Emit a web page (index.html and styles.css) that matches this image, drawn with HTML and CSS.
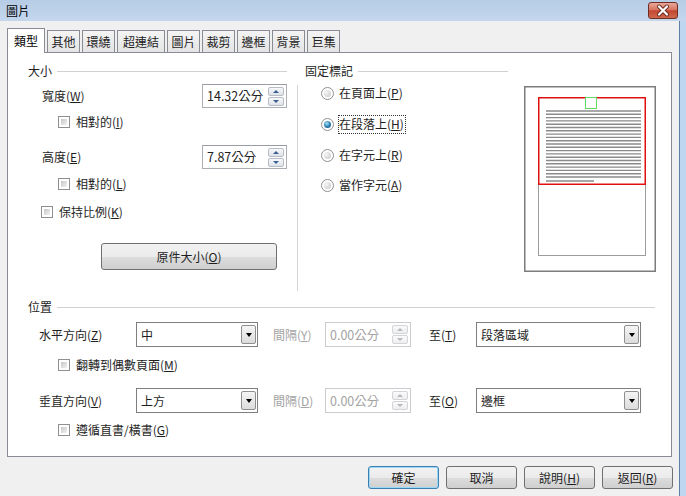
FILE: index.html
```html
<!DOCTYPE html>
<html lang="zh-Hant">
<head>
    <meta charset="UTF-8">
    <title>圖片</title>
    <link rel="stylesheet" href="styles.css">
</head>
<body>
<div class="window">
    <div class="titlebar">
        <span class="title">圖片</span>
        <div class="close-btn">
            <svg width="28" height="15" viewBox="0 0 28 15">
                <path d="M10 3.5 L18 11.5 M18 3.5 L10 11.5" stroke="#6b2b22" stroke-width="4" stroke-linecap="round"/>
                <path d="M10 3.5 L18 11.5 M18 3.5 L10 11.5" stroke="#fff" stroke-width="2.2" stroke-linecap="round"/>
            </svg>
        </div>
    </div>

    <div class="frame">
        <div class="client">
            <div class="tabs">
                <div class="tab active">類型</div>
                <div class="tab">其他</div>
                <div class="tab">環繞</div>
                <div class="tab long">超連結</div>
                <div class="tab">圖片</div>
                <div class="tab">裁剪</div>
                <div class="tab">邊框</div>
                <div class="tab">背景</div>
                <div class="tab">巨集</div>
            </div>

            <div class="panel">
                <div class="top">
                    <!-- 大小 -->
                    <div class="col-size">
                        <div class="group-title"><span>大小</span><i class="rule"></i></div>

                        <div class="field-row first">
                            <span class="label">寬度(<u>W</u>)</span>
                            <div class="spin">
                                <span class="spin-value">14.32公分</span>
                                <span class="spin-btns"><b class="up"></b><b class="down"></b></span>
                            </div>
                        </div>
                        <div class="check-row rel-w"><span class="check"></span><span>相對的(<u>I</u>)</span></div>

                        <div class="field-row second">
                            <span class="label">高度(<u>E</u>)</span>
                            <div class="spin">
                                <span class="spin-value">7.87公分</span>
                                <span class="spin-btns"><b class="up"></b><b class="down"></b></span>
                            </div>
                        </div>
                        <div class="check-row rel-h"><span class="check"></span><span>相對的(<u>L</u>)</span></div>

                        <div class="check-row keep"><span class="check"></span><span>保持比例(<u>K</u>)</span></div>

                        <div class="push-btn original">原件大小(<u>O</u>)</div>
                    </div>

                    <div class="vsep"></div>

                    <!-- 固定標記 -->
                    <div class="col-anchor">
                        <div class="group-title"><span>固定標記</span><i class="rule"></i></div>
                        <div class="radio-row r1"><span class="radio"></span><span>在頁面上(<u>P</u>)</span></div>
                        <div class="radio-row r2"><span class="radio on"></span><span class="focus">在段落上(<u>H</u>)</span></div>
                        <div class="radio-row r3"><span class="radio"></span><span>在字元上(<u>R</u>)</span></div>
                        <div class="radio-row r4"><span class="radio"></span><span>當作字元(<u>A</u>)</span></div>
                    </div>

                    <div class="preview">
                        <svg width="132" height="186" viewBox="0 0 132 186">
                            <rect x="0.75" y="0.75" width="130.5" height="184.5" fill="#fff" stroke="#7c7c7c" stroke-width="1.5"/>
                            <rect x="14.5" y="11.5" width="107" height="158" fill="#fff" stroke="#9c9c9c" stroke-width="1"/>
                            <g stroke="#8a8a8a" stroke-width="1.4">
                                <line x1="22" y1="25" x2="117" y2="25"/>
                                <line x1="22" y1="28.3" x2="117" y2="28.3"/>
                                <line x1="22" y1="31.6" x2="117" y2="31.6"/>
                                <line x1="22" y1="34.9" x2="117" y2="34.9"/>
                                <line x1="22" y1="38.2" x2="117" y2="38.2"/>
                                <line x1="22" y1="41.5" x2="117" y2="41.5"/>
                                <line x1="22" y1="44.8" x2="117" y2="44.8"/>
                                <line x1="22" y1="48.1" x2="117" y2="48.1"/>
                                <line x1="22" y1="51.4" x2="117" y2="51.4"/>
                                <line x1="22" y1="54.7" x2="117" y2="54.7"/>
                                <line x1="22" y1="58" x2="117" y2="58"/>
                                <line x1="22" y1="61.3" x2="117" y2="61.3"/>
                                <line x1="22" y1="64.6" x2="117" y2="64.6"/>
                                <line x1="22" y1="67.9" x2="117" y2="67.9"/>
                                <line x1="22" y1="71.2" x2="117" y2="71.2"/>
                                <line x1="22" y1="74.5" x2="117" y2="74.5"/>
                                <line x1="22" y1="77.8" x2="117" y2="77.8"/>
                                <line x1="22" y1="81.1" x2="117" y2="81.1"/>
                                <line x1="22" y1="84.4" x2="117" y2="84.4"/>
                                <line x1="22" y1="87.7" x2="117" y2="87.7"/>
                                <line x1="22" y1="91" x2="117" y2="91"/>
                                <line x1="22" y1="95" x2="70" y2="95"/>
                            </g>
                            <rect x="14.75" y="11.75" width="106.5" height="86.5" fill="none" stroke="#e01010" stroke-width="1.5"/>
                            <rect x="61.5" y="11.5" width="11" height="11" fill="#fff" stroke="#62d862" stroke-width="1"/>
                        </svg>
                    </div>
                </div>

                <!-- 位置 -->
                <div class="group-title wide"><span>位置</span><i class="rule"></i></div>

                <div class="pos-row first">
                    <span class="pos-label">水平方向(<u>Z</u>)</span>
                    <div class="combo"><span>中</span><span class="drop"></span></div>
                    <span class="gap-label">間隔(<u>Y</u>)</span>
                    <div class="spin disabled">
                        <span class="spin-value">0.00公分</span>
                        <span class="spin-btns"><b class="up"></b><b class="down"></b></span>
                    </div>
                    <span class="to-label">至(<u>T</u>)</span>
                    <div class="combo wide"><span>段落區域</span><span class="drop"></span></div>
                </div>
                <div class="check-row mirror"><span class="check"></span><span>翻轉到偶數頁面(<u>M</u>)</span></div>

                <div class="pos-row second">
                    <span class="pos-label">垂直方向(<u>V</u>)</span>
                    <div class="combo"><span>上方</span><span class="drop"></span></div>
                    <span class="gap-label">間隔(<u>D</u>)</span>
                    <div class="spin disabled">
                        <span class="spin-value">0.00公分</span>
                        <span class="spin-btns"><b class="up"></b><b class="down"></b></span>
                    </div>
                    <span class="to-label">至(<u>O</u>)</span>
                    <div class="combo wide"><span>邊框</span><span class="drop"></span></div>
                </div>
                <div class="check-row follow"><span class="check"></span><span>遵循直書/橫書(<u>G</u>)</span></div>
            </div>

            <div class="actions">
                <div class="push-btn default">確定</div>
                <div class="push-btn">取消</div>
                <div class="push-btn">說明(<u>H</u>)</div>
                <div class="push-btn">返回(<u>R</u>)</div>
            </div>
        </div>
        <div class="frame-right"></div>
    </div>
</div>
</body>
</html>
```

FILE: styles.css
```css
* {
    margin: 0;
    padding: 0;
    box-sizing: border-box;
}

body {
    font-family: "Noto Sans CJK TC", "Noto Sans", sans-serif;
    font-size: 12px;
    line-height: 16px;
    color: #1e1e1e;
    background: #f0f0f0;
    width: 686px;
    height: 496px;
    overflow: hidden;
}

u {
    text-decoration: underline;
    text-underline-offset: 1px;
}

.window {
    width: 686px;
    height: 496px;
    display: flex;
    flex-direction: column;
}

/* title bar */
.titlebar {
    height: 21px;
    display: flex;
    align-items: flex-start;
    padding: 0 8px 0 6px;
    background: linear-gradient(#b6cce6, #c4d7ed);
}

.title {
    line-height: 21px;
    color: #000;
}

.close-btn {
    margin-left: auto;
    margin-top: 2px;
    width: 30px;
    height: 17px;
    border: 1px solid #6e2e26;
    border-radius: 3px;
    background: linear-gradient(#e8a898, #d77562 45%, #c24630 52%, #cf6a4f);
    display: flex;
    align-items: center;
    justify-content: center;
}

.frame {
    flex: 1;
    display: flex;
}

.client {
    width: 679px;
    padding: 7px 6px 0 7px;
    background: #f0f0f0;
}

.frame-right {
    flex: 1;
    border-left: 1px solid #5d7fa6;
    background: #bed6ef;
}

/* tabs */
.tabs {
    height: 24px;
    display: flex;
    align-items: flex-end;
}

.tab {
    height: 22px;
    line-height: 21px;
    padding: 0 3.5px;
    margin-left: 2px;
    border: 1px solid #898c95;
    border-bottom: none;
    background: linear-gradient(#f4f4f4, #e4e4e4);
    color: #222;
}

.tab.long {
    padding: 0 5px;
}

.tab.active {
    height: 25px;
    line-height: 24px;
    padding: 0 6px;
    margin-left: 0;
    margin-bottom: -1px;
    background: #fff;
    position: relative;
    z-index: 1;
    color: #000;
}

/* panel */
.panel {
    width: 665px;
    height: 405px;
    border: 1px solid #898c95;
    background: #fff;
    padding: 10px 0 0 20px;
}

.top {
    display: flex;
    height: 228px;
}

.group-title {
    display: flex;
    align-items: center;
    height: 16px;
}

.group-title .rule {
    flex: 1;
    height: 1px;
    margin-left: 5px;
    background: #d0d0d0;
}

.group-title.wide {
    width: 627px;
    margin-top: 8px;
}

.col-size {
    width: 259px;
}

.field-row {
    display: flex;
    align-items: center;
    height: 24px;
}

.field-row.first { margin-top: 5px; }
.field-row.second { margin-top: 15px; }

.label {
    padding-left: 14px;
}

/* spin field */
.spin {
    margin-left: auto;
    width: 85px;
    height: 24px;
    border: 1px solid #abadb3;
    border-top-color: #9a9ca3;
    background: #fff;
    display: flex;
    align-items: center;
    padding-left: 4px;
}

.spin-value {
    flex: 1;
    font-size: 12.5px;
}

.spin-btns {
    width: 16px;
    margin-right: 2px;
    display: flex;
    flex-direction: column;
    gap: 1px;
}

.spin-btns b {
    height: 9px;
    border: 1px solid #b8bcc4;
    border-radius: 2px;
    background: linear-gradient(#f7f8fa, #dde3ea);
    display: flex;
    align-items: center;
    justify-content: center;
}

.spin-btns .up::after {
    content: "";
    border-left: 3px solid transparent;
    border-right: 3px solid transparent;
    border-bottom: 3px solid #3b5f8e;
}

.spin-btns .down::after {
    content: "";
    border-left: 3px solid transparent;
    border-right: 3px solid transparent;
    border-top: 3px solid #3b5f8e;
}

.spin.disabled {
    margin-left: 0;
    width: 86px;
    height: 25px;
    border-color: #c9cbd0;
    color: #a3a3a3;
}

.spin.disabled .spin-btns b {
    border-color: #d2d4d8;
    background: linear-gradient(#fafafa, #eeeeee);
}

.spin.disabled .spin-btns .up::after { border-bottom-color: #b4b8bf; }
.spin.disabled .spin-btns .down::after { border-top-color: #b4b8bf; }

/* checkboxes */
.check-row {
    display: flex;
    align-items: center;
    gap: 6px;
    height: 16px;
    padding-left: 30px;
}

.rel-w { margin-top: 6px; }
.rel-h { margin-top: 7px; }
.keep { margin-top: 12px; padding-left: 13px; }
.mirror { margin-top: 10px; }
.follow { margin-top: 9px; }

.check {
    width: 12px;
    height: 12px;
    border: 1px solid #8e8f8f;
    padding: 2px;
    background: #fff;
}

.check::after {
    content: "";
    display: block;
    width: 100%;
    height: 100%;
    background: linear-gradient(135deg, #c6c6c6, #f2f2f2);
}

/* buttons */
.push-btn {
    height: 23px;
    width: 71px;
    line-height: 21px;
    text-align: center;
    border: 1px solid #707070;
    border-radius: 3px;
    background: linear-gradient(#f2f2f2, #ebebeb 50%, #dddddd 51%, #cfcfcf);
    color: #1e1e1e;
}

.push-btn.original {
    margin-top: 23px;
    margin-left: 73px;
    width: 176px;
    height: 27px;
    line-height: 25px;
}

.push-btn.default {
    border-color: #3c7fb1;
    box-shadow: inset 0 0 0 1px #9bd8f5;
}

.vsep {
    width: 1px;
    margin: 22px 0 0 10px;
    background: #d5d5d5;
}

/* anchor radios */
.col-anchor {
    width: 203px;
    margin-left: 7px;
}

.radio-row {
    display: flex;
    align-items: center;
    gap: 5px;
    height: 16px;
    padding-left: 16px;
}

.r1 { margin-top: 6px; }
.r2 { margin-top: 15px; }
.r3 { margin-top: 15px; }
.r4 { margin-top: 14px; }

.radio {
    width: 13px;
    height: 13px;
    border: 1px solid #8e8f8f;
    border-radius: 50%;
    padding: 2px;
    background: #fff;
}

.radio::after {
    content: "";
    display: block;
    width: 100%;
    height: 100%;
    border-radius: 50%;
    background: radial-gradient(circle at 35% 35%, #f6f6f6, #c4c4c4);
}

.radio.on::after {
    background: radial-gradient(circle at 40% 35%, #a6e3f8, #2a7bb0 55%, #0f4470);
}

.focus {
    border: 1px dotted #333;
    margin-left: -1px;
    padding: 0 1px 1px 0;
    line-height: 16px;
}

.preview {
    margin: 23px 0 0 16px;
    width: 132px;
    height: 186px;
}

/* position rows */
.pos-row {
    display: flex;
    align-items: center;
    height: 25px;
}

.pos-row.first { margin-top: 7px; }
.pos-row.second { margin-top: 15px; }

.pos-label {
    width: 108px;
    padding-left: 11px;
}

.combo {
    width: 122px;
    height: 25px;
    border: 1px solid #7e7e7e;
    background: #fff;
    display: flex;
    align-items: center;
    padding: 0 1px 0 4px;
}

.combo span:first-child {
    flex: 1;
}

.combo .drop {
    width: 15px;
    height: 19px;
    border: 1px solid #8e8f8f;
    border-radius: 2px;
    background: linear-gradient(#f4f4f4, #dcdcdc);
    display: flex;
    align-items: center;
    justify-content: center;
}

.combo .drop::after {
    content: "";
    border-left: 3.5px solid transparent;
    border-right: 3.5px solid transparent;
    border-top: 4px solid #000;
}

.combo.wide {
    width: 165px;
}

.gap-label {
    margin-left: 15px;
    width: 52px;
    color: #a3a3a3;
}

.to-label {
    margin-left: 18px;
    width: 47px;
}

.actions {
    display: flex;
    justify-content: flex-end;
    gap: 7px;
    margin-top: 9px;
}
```
